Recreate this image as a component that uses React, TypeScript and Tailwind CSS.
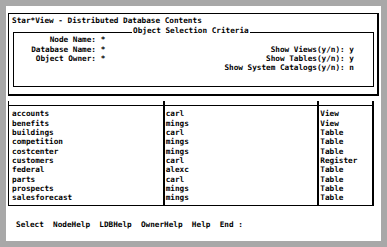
import React from "react";

const rows: [string, string, string][] = [
  ["accounts", "carl", "View"],
  ["benefits", "mings", "View"],
  ["buildings", "carl", "Table"],
  ["competition", "mings", "Table"],
  ["costcenter", "mings", "Table"],
  ["customers", "carl", "Register"],
  ["federal", "alexc", "Table"],
  ["parts", "carl", "Table"],
  ["prospects", "mings", "Table"],
  ["salesforecast", "mings", "Table"],
];

export default function App() {
  return (
    <div className="w-[387px] h-[247px] bg-[#a8a8a8] p-[6px] font-['DejaVu_Sans_Mono','Liberation_Mono',monospace] font-bold text-[7.7px] leading-[9.33px] text-black whitespace-pre">
      <div className="h-full w-full bg-white flex flex-col">
        {/* Header box */}
        <div className="ml-[2px] mt-[7px] w-[371px] h-[83px] border-t border-l border-r-2 border-b-2 border-black flex flex-col">
          <div className="pl-[3px] mt-[2.33px] h-[9.33px]">Star*View - Distributed Database Contents</div>
          <div className="relative ml-[4px] w-[361px] mt-[6.33px] h-[55px] border border-black">
            <span className="absolute left-[118px] top-[-7.2px] bg-white px-[1px] h-[9.33px]">Object Selection Criteria</span>
            <div className="pt-[2.33px] flex justify-between">
              <div className="flex flex-col">
                <div className="flex h-[9.33px]">
                  <span className="w-[82px] text-right">Node Name:</span>
                  <span> *</span>
                </div>
                <div className="flex h-[9.33px]">
                  <span className="w-[82px] text-right">Database Name:</span>
                  <span> *</span>
                </div>
                <div className="flex h-[9.33px]">
                  <span className="w-[82px] text-right">Object Owner:</span>
                  <span> *</span>
                </div>
              </div>
              <div className="flex flex-col pt-[9.33px] pr-[19px] text-right">
                <div className="h-[9.33px]">Show Views(y/n): y</div>
                <div className="h-[9.33px]">Show Tables(y/n): y</div>
                <div className="h-[9.33px]">Show System Catalogs(y/n): n</div>
              </div>
            </div>
          </div>
        </div>

        {/* Table */}
        <div className="ml-[2px] mt-[5px] flex w-[366px]">
          <div className="w-[155px] border-l border-black flex flex-col">
            <div className="h-[4px]" />
            <div className="border-t border-b border-black pt-[3.33px] pb-[2px] pl-[3px]">
              {rows.map((r) => (
                <div key={r[0]} className="h-[9.33px]">{r[0]}</div>
              ))}
            </div>
          </div>
          <div className="w-[154px] border-l-2 border-black flex flex-col">
            <div className="h-[4px]" />
            <div className="border-t border-b border-black pt-[3.33px] pb-[2px] pl-[0.7px]">
              {rows.map((r) => (
                <div key={r[0]} className="h-[9.33px]">{r[1]}</div>
              ))}
            </div>
          </div>
          <div className="w-[57px] border-l-2 border-r-2 border-black flex flex-col">
            <div className="h-[4px]" />
            <div className="border-t border-b border-black pt-[3.33px] pb-[2px] pl-[1.3px]">
              {rows.map((r) => (
                <div key={r[0]} className="h-[9.33px]">{r[2]}</div>
              ))}
            </div>
          </div>
        </div>

        {/* Menu */}
        <div className="mt-[14.67px] pl-[10px] h-[9.33px]">Select  NodeHelp  LDBHelp  OwnerHelp  Help  End :</div>
      </div>
    </div>
  );
}
